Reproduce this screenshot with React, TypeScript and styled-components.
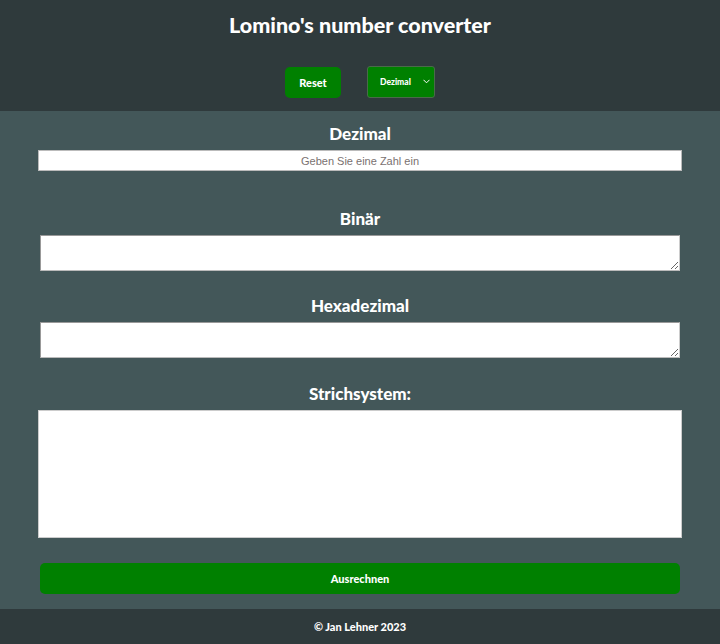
import React from "react";
import styled, { createGlobalStyle } from "styled-components";

const Global = createGlobalStyle`
  html, body { margin: 0; padding: 0; }
  body { background: #435759; font-family: "Lato", "Noto Sans", sans-serif; }
  * { box-sizing: border-box; }
`;

const Page = styled.div`
  display: flex;
  flex-direction: column;
  min-height: 644px;
`;

const Header = styled.header`
  background: #2f3a3c;
  height: 111px;
  display: flex;
  flex-direction: column;
  align-items: center;
  padding-top: 11px;
`;

const Title = styled.h1`
  margin: 0;
  color: #fff;
  font-size: 21.5px;
  font-weight: 900;
  line-height: 28px;
`;

const Controls = styled.div`
  display: flex;
  gap: 26px;
  margin-top: 27px;
  align-items: center;
`;

const GreenButton = styled.button<{ $wide?: boolean }>`
  background: #008000;
  color: #fff;
  border: none;
  border-radius: 5px;
  font-family: "Lato", sans-serif;
  font-weight: 900;
  font-size: 11px;
  height: 31px;
  width: ${(p) => (p.$wide ? "640px" : "56px")};
  cursor: pointer;
`;

const SelectWrap = styled.div`
  position: relative;
  width: 68px;
  height: 32px;
`;

const Select = styled.select`
  appearance: none;
  width: 100%;
  height: 100%;
  background: #008000;
  color: #fff;
  border: 1px solid #4a6a4a;
  border-radius: 3px;
  font-family: "Lato", sans-serif;
  font-weight: 900;
  font-size: 8.5px;
  padding-left: 12px;
`;

const Chevron = styled.svg`
  position: absolute;
  right: 5px;
  top: 13px;
  pointer-events: none;
`;

const Main = styled.main`
  flex: 1;
  display: flex;
  flex-direction: column;
  align-items: center;
  padding: 13px 38px 15px;
`;

const Label = styled.h2<{ $top: number }>`
  margin: ${(p) => p.$top}px 0 0;
  color: #fff;
  font-size: 17px;
  font-weight: 900;
  line-height: 20px;
  height: 26px;
`;

const Input = styled.input`
  width: 644px;
  height: 21px;
  border: 1px solid #bbb;
  text-align: center;
  font-family: "Liberation Sans", Arial, sans-serif;
  font-size: 11px;
  &::placeholder { color: #7a7170; }
`;

const Area = styled.textarea`
  width: 640px;
  height: 36px;
  border: 1px solid #999;
  border-right-color: #ccc;
  border-bottom-color: #bbb;
  resize: vertical;
  display: block;
`;

const BigBox = styled.div`
  width: 644px;
  height: 128px;
  background: #fff;
  border: 1px solid #ccc;
`;

const Spacer = styled.div`
  height: 25px;
`;

const Footer = styled.footer`
  background: #2f3a3c;
  height: 35px;
  display: flex;
  align-items: center;
  justify-content: center;
  color: #fff;
  font-size: 11px;
  font-weight: 900;
`;

export default function App() {
  return (
    <Page>
      <Global />
      <Header>
        <Title>Lomino's number converter</Title>
        <Controls>
          <GreenButton>Reset</GreenButton>
          <SelectWrap>
            <Select defaultValue="dez">
              <option value="dez">Dezimal</option>
              <option value="bin">Binär</option>
              <option value="hex">Hexadezimal</option>
            </Select>
            <Chevron width="7" height="5" viewBox="0 0 7 5">
              <path d="M0.5 0.8 L3.5 3.8 L6.5 0.8" fill="none" stroke="#fff" strokeWidth="1" />
            </Chevron>
          </SelectWrap>
        </Controls>
      </Header>
      <Main>
        <Label $top={0}>Dezimal</Label>
        <Input placeholder="Geben Sie eine Zahl ein" />
        <Label $top={38}>Binär</Label>
        <Area />
        <Label $top={25}>Hexadezimal</Label>
        <Area />
        <Label $top={26}>Strichsystem:</Label>
        <BigBox />
        <Spacer />
        <GreenButton $wide>Ausrechnen</GreenButton>
      </Main>
      <Footer>© Jan Lehner 2023</Footer>
    </Page>
  );
}
